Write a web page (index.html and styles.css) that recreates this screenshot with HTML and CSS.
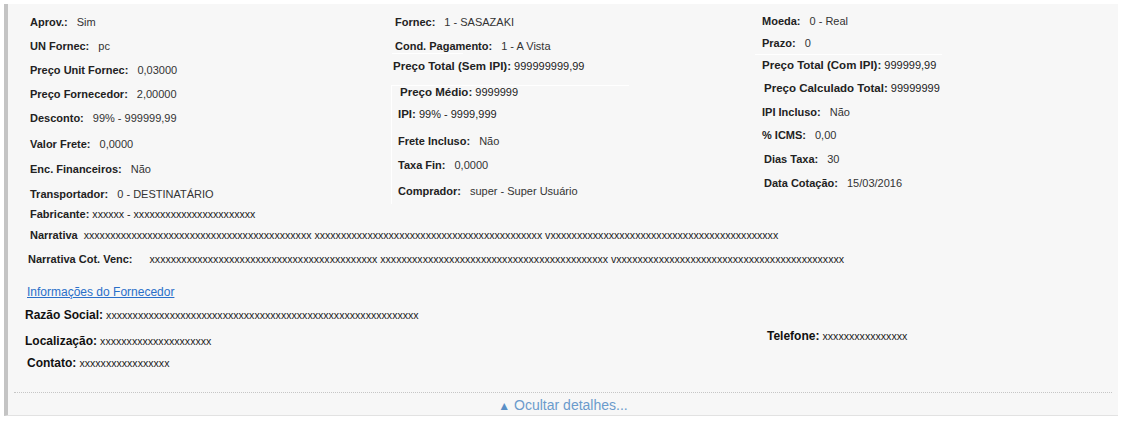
FILE: index.html
```html
<!DOCTYPE html>
<html lang="pt-BR">
<head>
<meta charset="UTF-8">
<meta name="viewport" content="width=device-width, initial-scale=1.0">
<title>Detalhes da Cotação</title>
<link rel="stylesheet" href="styles.css">
</head>
<body>
  <div class="panel">
    <div class="fields">
      <div class="col col-a">
        <div class="row"><b>Aprov.:</b><span class="val">Sim</span></div>
        <div class="row"><b>UN Fornec:</b><span class="val">pc</span></div>
        <div class="row"><b>Preço Unit Fornec:</b><span class="val">0,03000</span></div>
        <div class="row"><b>Preço Fornecedor:</b><span class="val">2,00000</span></div>
        <div class="row"><b>Desconto:</b><span class="val">99% - 999999,99</span></div>
        <div class="row"><b>Valor Frete:</b><span class="val">0,0000</span></div>
        <div class="row"><b>Enc. Financeiros:</b><span class="val">Não</span></div>
        <div class="row"><b>Transportador:</b><span class="val">0 - DESTINATÁRIO</span></div>
      </div>
      <div class="col col-b">
        <div class="row"><b>Fornec:</b><span class="val">1 - SASAZAKI</span></div>
        <div class="row"><b>Cond. Pagamento:</b><span class="val">1 - A Vista</span></div>
        <div class="rule"></div>
        <div class="row total"><b>Preço Total (Sem IPI):</b> <span>999999999,99</span></div>
        <div class="sub">
          <div class="row total"><b>Preço Médio:</b> <span>9999999</span></div>
          <div class="row total"><b>IPI:</b> <span>99% - 9999,999</span></div>
          <div class="row"><b>Frete Incluso:</b><span class="val">Não</span></div>
          <div class="row"><b>Taxa Fin:</b><span class="val">0,0000</span></div>
          <div class="row"><b>Comprador:</b><span class="val">super - Super Usuário</span></div>
        </div>
      </div>
      <div class="col col-c">
        <div class="row"><b>Moeda:</b><span class="val">0 - Real</span></div>
        <div class="row"><b>Prazo:</b><span class="val">0</span></div>
        <div class="row total"><b>Preço Total (Com IPI):</b> <span>999999,99</span></div>
        <div class="row total"><b>Preço Calculado Total:</b> <span>99999999</span></div>
        <div class="row"><b>IPI Incluso:</b><span class="val">Não</span></div>
        <div class="row"><b>% ICMS:</b><span class="val">0,00</span></div>
        <div class="row"><b>Dias Taxa:</b><span class="val">30</span></div>
        <div class="row"><b>Data Cotação:</b><span class="val">15/03/2016</span></div>
      </div>
    </div>

    <div class="text-rows">
      <div class="line-row fab"><b>Fabricante:</b> <span class="xs">xxxxxx - xxxxxxxxxxxxxxxxxxxxxxx</span></div>
      <div class="line-row narr"><b>Narrativa</b><span class="xs gap">xxxxxxxxxxxxxxxxxxxxxxxxxxxxxxxxxxxxxxxxxxx xxxxxxxxxxxxxxxxxxxxxxxxxxxxxxxxxxxxxxxxxxx vxxxxxxxxxxxxxxxxxxxxxxxxxxxxxxxxxxxxxxxxxxx</span></div>
      <div class="line-row narr-cot"><b>Narrativa Cot. Venc:</b><span class="xs gap-lg">xxxxxxxxxxxxxxxxxxxxxxxxxxxxxxxxxxxxxxxxxxx xxxxxxxxxxxxxxxxxxxxxxxxxxxxxxxxxxxxxxxxxxx vxxxxxxxxxxxxxxxxxxxxxxxxxxxxxxxxxxxxxxxxxxx</span></div>
    </div>

    <div class="supplier">
      <a href="#" class="supplier-link">Informações do Fornecedor</a>
      <div class="sup-row social"><b>Razão Social:</b> <span class="xs">xxxxxxxxxxxxxxxxxxxxxxxxxxxxxxxxxxxxxxxxxxxxxxxxxxxxxxxxxxx</span></div>
      <div class="sup-pair">
        <div class="sup-row local"><b>Localização:</b> <span class="xs">xxxxxxxxxxxxxxxxxxxxx</span></div>
        <div class="sup-row phone"><b>Telefone:</b> <span class="xs">xxxxxxxxxxxxxxxx</span></div>
      </div>
      <div class="sup-row contact"><b>Contato:</b> <span class="xs">xxxxxxxxxxxxxxxxx</span></div>
    </div>

    <div class="toggle">
      <span class="arrow">&#9650;</span> Ocultar detalhes...
    </div>
  </div>
</body>
</html>
```

FILE: styles.css
```css
body {
  margin: 0;
  padding: 0;
  background-color: #ffffff;
  font-family: "Liberation Sans", Arial, sans-serif;
  font-size: 11px;
  color: #333333;
}

.panel {
  margin: 4px 5px 0 4px;
  height: 411px;
  background-color: #f7f7f7;
  border-left: 4px solid #c4c4c4;
  border-bottom: 1px solid #e2e2e2;
  display: flex;
  flex-direction: column;
}

.fields {
  display: grid;
  grid-template-columns: 365px 367px 1fr;
  padding: 6px 0 0 22px;
}

.col b {
  color: #222222;
  font-weight: bold;
}

.row {
  white-space: nowrap;
}

.val {
  margin-left: 9px;
}

.row.total b {
  font-size: 11.5px;
}

.row.total span {
  color: #222222;
}

/* coluna 1 */
.col-a .row {
  height: 24px;
  line-height: 24px;
}

.col-a .row:nth-child(5),
.col-a .row:nth-child(7) {
  height: 25px;
  line-height: 25px;
}

.col-a .row:nth-child(6) {
  height: 26px;
  line-height: 26px;
}

/* coluna 2 */
.col-b .row {
  height: 24px;
  line-height: 24px;
}

.col-b .row:nth-child(2) {
  height: 19px;
}

.col-b .rule {
  width: 71px;
  height: 1px;
  margin-left: -3px;
  background-color: #ffffff;
}

.col-b .row.total {
  height: 31px;
  line-height: 25px;
  margin-left: -2px;
}

.col-b .sub {
  margin-left: -4px;
  padding-left: 6px;
  border-left: 1px solid #ffffff;
  border-top: 1px solid #ffffff;
  width: 231px;
}

.col-b .sub .row:nth-child(1) {
  height: 12px;
  line-height: 13px;
  margin-left: 2px;
}

.col-b .sub .row:nth-child(2) {
  height: 32px;
  line-height: 32px;
  margin-left: 0;
}

.col-b .sub .row:nth-child(3) {
  height: 22px;
  line-height: 22px;
}

.col-b .sub .row:nth-child(4),
.col-b .sub .row:nth-child(5) {
  height: 26px;
  line-height: 26px;
}

/* coluna 3 */
.col-c .row {
  height: 24px;
  line-height: 24px;
}

.col-c .row:nth-child(1),
.col-c .row:nth-child(2) {
  height: 22px;
  line-height: 22px;
}

.col-c .row:nth-child(3) {
  height: 21px;
  line-height: 21px;
  width: 180px;
  margin-left: -7px;
  padding-left: 7px;
  border-top: 1px solid #ffffff;
}

.col-c .row:nth-child(4) {
  padding-left: 2px;
}

.col-c .row:nth-child(6) {
  height: 23px;
  line-height: 23px;
}

.col-c .row:nth-child(7),
.col-c .row:nth-child(8) {
  padding-left: 2px;
}

/* textos longos */
.xs {
  font-size: 10.6px;
  color: #222222;
}

.text-rows {
  padding-left: 22px;
  color: #222222;
}

.line-row {
  white-space: nowrap;
  height: 20px;
  line-height: 20px;
}

.fab {
  margin-top: -2px;
}

.narr {
  margin-top: 1px;
}

.narr-cot {
  margin-top: 4px;
  margin-left: -2px;
}

.gap {
  margin-left: 6px;
}

.gap-lg {
  margin-left: 17px;
}

/* fornecedor */
.supplier {
  padding-left: 17px;
  color: #111111;
}

.supplier-link {
  display: block;
  width: max-content;
  margin-top: 13px;
  margin-left: 2px;
  height: 20px;
  line-height: 20px;
  font-size: 12px;
  color: #2a6fc9;
  text-decoration: underline;
}

.sup-row {
  white-space: nowrap;
  height: 20px;
  line-height: 20px;
}

.sup-row b {
  font-size: 12px;
  font-weight: bold;
}

.social {
  margin-top: 3px;
}

.sup-pair {
  display: flex;
  margin-top: 6px;
}

.local {
  width: 742px;
}

.phone {
  margin-top: -5px;
}

.contact {
  margin-left: 2px;
  margin-top: 2px;
}

.toggle {
  margin: auto 6px 0 6px;
  border-top: 1px dotted #c6c6c6;
  height: 22px;
  line-height: 24px;
  text-align: center;
  font-size: 14px;
  color: #6b9bcc;
}

.arrow {
  font-size: 12px;
  color: #5a8fc6;
}
```
